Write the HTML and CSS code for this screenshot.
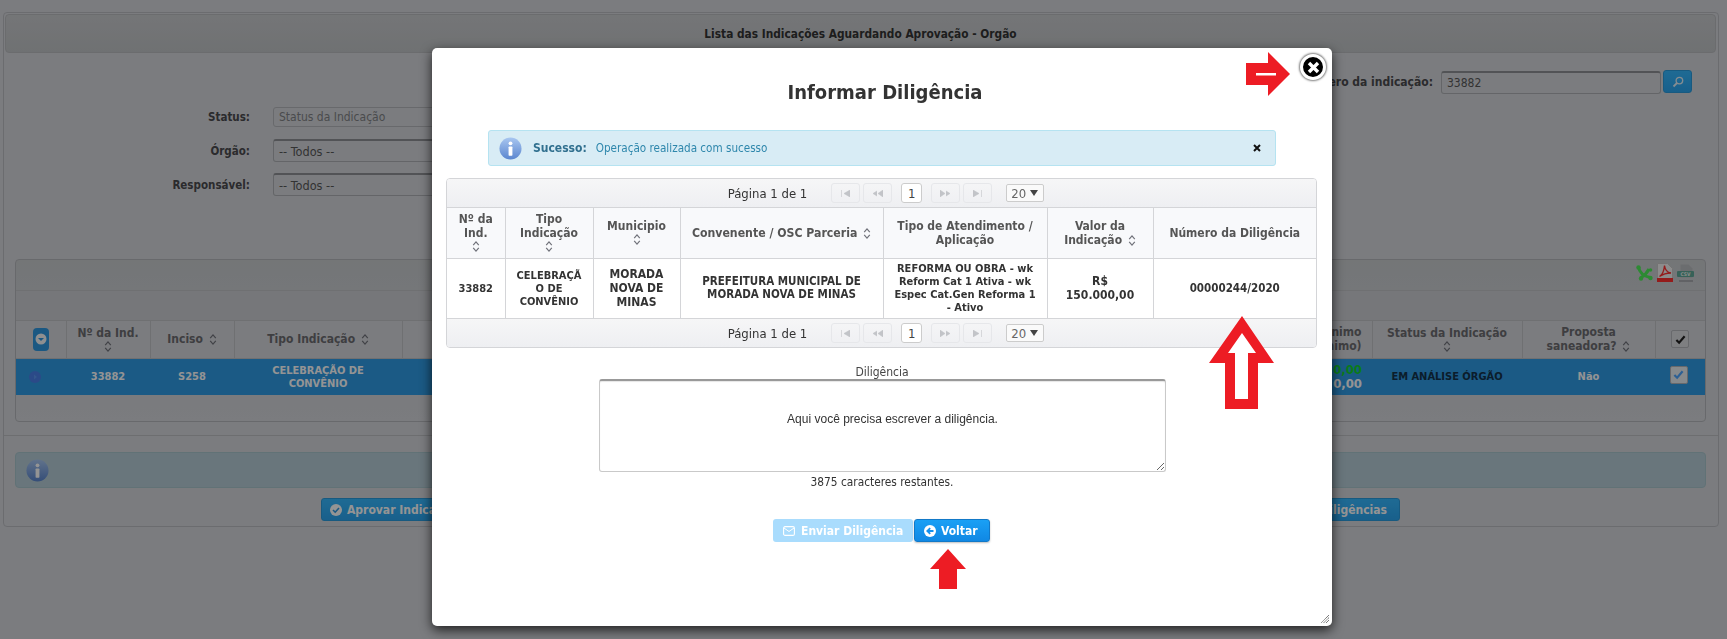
FILE: index.html
```html
<!DOCTYPE html>
<html lang="pt-BR">
<head>
<meta charset="utf-8">
<title>Lista das Indicações</title>
<link rel="stylesheet" href="styles.css">
</head>
<body>
<svg class="defs" width="0" height="0" aria-hidden="true">
  <symbol id="sort" viewBox="0 0 8 14"><path d="M1 5.500 4 2l3 3.500M1 8.500 4 12l3-3.500" fill="none" stroke="currentColor" stroke-width="1.300"/></symbol>
  <symbol id="check" viewBox="0 0 12 12"><path d="M1.500 6.500 4.500 9.500 10.500 2.500" fill="none" stroke="currentColor" stroke-width="2.400"/></symbol>
  <symbol id="info" viewBox="0 0 24 24"><circle cx="12" cy="12" r="11.500" fill="url(#infograd)"/><circle cx="12" cy="6.600" r="2" fill="#fff"/><rect x="10" y="10" width="4" height="9.500" rx=".8" fill="#fff"/></symbol>
  <linearGradient id="infograd" x1="0" y1="0" x2="0" y2="1"><stop offset="0" stop-color="#a8c6f0"/><stop offset="1" stop-color="#5b86cf"/></linearGradient>
</svg>

<div class="panel">
  <header class="panel-title">Lista das Indicações Aguardando Aprovação - Orgão</header>
  <form class="filters">
    <div class="filters-left">
      <div class="filter-row status-row"><label>Status:</label><span class="field field-disabled">Status da Indicação</span></div>
      <div class="filter-row organ-row"><label>Órgão:</label><span class="field field-select">-- Todos --</span></div>
      <div class="filter-row resp-row"><label>Responsável:</label><span class="field field-select">-- Todos --</span></div>
    </div>
    <div class="filters-right">
      <label>Número da indicação:</label>
      <span class="field field-number">33882</span>
      <button type="button" class="search-btn"><svg width="12" height="12" viewBox="0 0 12 12"><circle cx="7.400" cy="4.600" r="3.300" fill="none" stroke="#e6f2fa" stroke-width="1.300"/><path d="M5 7 1.500 10.500" stroke="#e6f2fa" stroke-width="1.800"/></svg></button>
    </div>
  </form>

  <section class="grid-panel">
    <div class="grid-tools">
      <svg width="17" height="16" viewBox="0 0 17 16"><path d="M2.500 2c1 6 5 9 11.500 10.500M13 4c-2 4-5 7-8.500 9" fill="none" stroke="#4eee58" stroke-width="3"/><circle cx="2.500" cy="2.500" r="2.200" fill="#4eee58"/><circle cx="14.500" cy="13" r="2.200" fill="#4eee58"/><circle cx="5" cy="13.500" r="2.200" fill="#4eee58"/><circle cx="14.500" cy="5" r="1.800" fill="#4eee58"/></svg>
      <svg width="16" height="19" viewBox="0 0 16 19"><path d="M.5.500h10l5 5v13H.5z" fill="#f2f2f2" stroke="#c8c8c8"/><rect y="15" width="16" height="4" fill="#ff3030"/><path d="M2.500 13.500C5 12 7 8 7.500 2.500c.5 4 3 7 6.500 7.500-4 0-8 1-11.500 3.500z" fill="none" stroke="#ff3030" stroke-width="1.300"/></svg>
      <svg width="17" height="18" viewBox="0 0 17 18"><path d="M3.500.500h8l4 4v9h-12z" fill="#b9bcc0"/><rect y="7" width="17" height="6" rx="1" fill="#5fa898"/><text x="8.500" y="12" class="csv-text">CSV</text><rect x="2" y="16" width="14" height="2" fill="#a7aaae"/></svg>
    </div>
    <div class="grid-band"></div>
    <table class="grid">
      <colgroup><col class="c1"><col class="c2"><col class="c3"><col class="c4"><col class="c5"><col class="c6"><col class="c7"><col class="c8"><col class="c9"></colgroup>
      <thead>
        <tr>
          <th><span class="expand-all"><svg width="12" height="12" viewBox="0 0 12 12"><circle cx="6" cy="6" r="5.500" fill="#f4f6f8"/><path d="M3 5h6L6 8z" fill="#2f98e0"/></svg></span></th>
          <th>Nº da Ind.<svg class="sort sort-block"><use href="#sort"/></svg></th>
          <th>Inciso <svg class="sort"><use href="#sort"/></svg></th>
          <th>Tipo Indicação <svg class="sort"><use href="#sort"/></svg></th>
          <th></th>
          <th class="right">Valor Mínimo<br>(Valor mínimo)</th>
          <th>Status da Indicação<svg class="sort sort-block"><use href="#sort"/></svg></th>
          <th>Proposta<br>saneadora? <svg class="sort"><use href="#sort"/></svg></th>
          <th><span class="checkbox"><svg width="11" height="11"><use href="#check"/></svg></span></th>
        </tr>
      </thead>
      <tbody>
        <tr class="selected">
          <td><svg class="row-toggle" width="12" height="12" viewBox="0 0 12 12"><circle cx="6" cy="6" r="6" fill="#4a80ea"/><path d="M5 3.500 8 6 5 8.500z" fill="#5a96f2"/></svg></td>
          <td>33882</td>
          <td>S258</td>
          <td>CELEBRAÇÃO DE<br>CONVÊNIO</td>
          <td></td>
          <td class="right values"><span class="money-green">R$ 100.000,00</span><br>R$ 0,00</td>
          <td class="dark">EM ANÁLISE ÓRGÃO</td>
          <td>Não</td>
          <td><span class="checkbox checkbox-on"><svg width="11" height="11"><use href="#check"/></svg></span></td>
        </tr>
      </tbody>
    </table>
    <div class="grid-footer"></div>
  </section>

  <div class="panel-foot">
    <div class="info-box"><svg width="23" height="23"><use href="#info"/></svg></div>
    <div class="actions">
      <button type="button" class="btn-dim"><svg width="12" height="12" viewBox="0 0 12 12"><circle cx="6" cy="6" r="6" fill="#fff"/><path d="M3 6l2.200 2.200L9 4" fill="none" stroke="#2f98e0" stroke-width="1.600"/></svg>Aprovar Indicação</button>
      <button type="button" class="btn-dim">Reprovar Indicação</button>
      <button type="button" class="btn-dim">Informar Diligências</button>
    </div>
  </div>
</div>

<div class="overlay"></div>

<div class="modal" role="dialog">
  <h2 class="modal-title">Informar Diligência</h2>
  <div class="alert">
    <svg class="alert-icon" width="23" height="23"><use href="#info"/></svg>
    <strong>Sucesso:</strong>
    <span class="alert-text">Operação realizada com sucesso</span>
    <svg class="alert-close" width="8" height="8" viewBox="0 0 8 8"><path d="M1 1l6 6M7 1 1 7" stroke="#111" stroke-width="2"/></svg>
  </div>

  <div class="datatable">
    <div class="pager pager-top">
      <span class="pager-label">Página 1 de 1</span>
      <span class="pbtns">
        <span class="pbtn"><svg width="9" height="7" viewBox="0 0 9 7"><path d="M.5 0v7M9 0v7L3 3.500z" fill="#c2c4c8" stroke="#c2c4c8" stroke-width=".6"/></svg></span>
        <span class="pbtn"><svg width="11" height="7" viewBox="0 0 11 7"><path d="M5 1 1 3.500 5 6M11 0v7L6 3.500z" fill="#c2c4c8" stroke="#c2c4c8" stroke-width=".6"/></svg></span>
      </span>
      <span class="pnum">1</span>
      <span class="pbtns">
        <span class="pbtn"><svg width="11" height="7" viewBox="0 0 11 7"><path d="M6 1l4 2.500L6 6M0 0v7l5-3.500z" fill="#c2c4c8" stroke="#c2c4c8" stroke-width=".6"/></svg></span>
        <span class="pbtn"><svg width="9" height="7" viewBox="0 0 9 7"><path d="M8.500 0v7M0 0v7l6-3.500z" fill="#c2c4c8" stroke="#c2c4c8" stroke-width=".6"/></svg></span>
      </span>
      <span class="psize">20 <i class="caret"></i></span>
    </div>
    <table class="dtable">
      <colgroup><col class="d1"><col class="d2"><col class="d3"><col class="d4"><col class="d5"><col class="d6"><col class="d7"></colgroup>
      <thead>
        <tr>
          <th>Nº da<br>Ind.<svg class="sort sort-block"><use href="#sort"/></svg></th>
          <th>Tipo<br>Indicação<svg class="sort sort-block"><use href="#sort"/></svg></th>
          <th>Municipio<svg class="sort sort-block"><use href="#sort"/></svg></th>
          <th class="wide-head">Convenente / OSC Parceria <svg class="sort"><use href="#sort"/></svg></th>
          <th>Tipo de Atendimento /<br>Aplicação</th>
          <th>Valor da<br>Indicação <svg class="sort"><use href="#sort"/></svg></th>
          <th>Número da Diligência</th>
        </tr>
      </thead>
      <tbody>
        <tr>
          <td>33882</td>
          <td>CELEBRAÇÃ<br>O DE<br>CONVÊNIO</td>
          <td class="strong12">MORADA<br>NOVA DE<br>MINAS</td>
          <td class="mid-cell">PREFEITURA MUNICIPAL DE<br>MORADA NOVA DE MINAS</td>
          <td>REFORMA OU OBRA - wk<br>Reform Cat 1 Ativa - wk<br>Espec Cat.Gen Reforma 1<br>- Ativo</td>
          <td class="strong12">R$<br>150.000,00</td>
          <td class="mid-cell">00000244/2020</td>
        </tr>
      </tbody>
    </table>
    <div class="pager pager-bottom">
      <span class="pager-label">Página 1 de 1</span>
      <span class="pbtns">
        <span class="pbtn"><svg width="9" height="7" viewBox="0 0 9 7"><path d="M.5 0v7M9 0v7L3 3.500z" fill="#c2c4c8" stroke="#c2c4c8" stroke-width=".6"/></svg></span>
        <span class="pbtn"><svg width="11" height="7" viewBox="0 0 11 7"><path d="M5 1 1 3.500 5 6M11 0v7L6 3.500z" fill="#c2c4c8" stroke="#c2c4c8" stroke-width=".6"/></svg></span>
      </span>
      <span class="pnum">1</span>
      <span class="pbtns">
        <span class="pbtn"><svg width="11" height="7" viewBox="0 0 11 7"><path d="M6 1l4 2.500L6 6M0 0v7l5-3.500z" fill="#c2c4c8" stroke="#c2c4c8" stroke-width=".6"/></svg></span>
        <span class="pbtn"><svg width="9" height="7" viewBox="0 0 9 7"><path d="M8.500 0v7M0 0v7l6-3.500z" fill="#c2c4c8" stroke="#c2c4c8" stroke-width=".6"/></svg></span>
      </span>
      <span class="psize">20 <i class="caret"></i></span>
    </div>
  </div>

  <label class="note-label" for="note">Diligência</label>
  <textarea id="note" class="note">Aqui você precisa escrever a diligência.</textarea>
  <div class="note-count">3875 caracteres restantes.</div>

  <div class="modal-actions">
    <button type="button" class="btn btn-send"><svg width="12" height="10" viewBox="0 0 12 10"><rect x=".6" y=".6" width="10.800" height="8.800" rx="1.500" fill="none" stroke="#fff" stroke-width="1.100"/><path d="M1 2l5 3.500L11 2" fill="none" stroke="#fff"/></svg>Enviar Diligência</button>
    <button type="button" class="btn btn-back"><svg width="12" height="12" viewBox="0 0 12 12"><circle cx="6" cy="6" r="6" fill="#fff"/><path d="M9.500 6H4M6.200 3.200 3.300 6l2.900 2.800" fill="none" stroke="#1391ef" stroke-width="1.800"/></svg>Voltar</button>
  </div>

  <button type="button" class="close" aria-label="Fechar"><svg width="15" height="15" viewBox="0 0 15 15"><path d="M3 3l9 9M12 3l-9 9" stroke="#fff" stroke-width="3.400"/></svg></button>

  <svg class="arrow arrow-right" width="45" height="45" viewBox="0 0 45 45"><path d="M0 11h22V0l22 22-22 22V33H0z" fill="#ed1c24"/><rect x="10" y="21" width="20" height="2.500" fill="#fff"/></svg>
  <svg class="arrow arrow-up-big" width="65" height="93" viewBox="0 0 65 93"><path d="M33 0 65 47H49V93H16V47H0z" fill="#ed1c24"/><path d="M33 17 47 37H39V83H26V37H19z" fill="#fff"/></svg>
  <svg class="arrow arrow-up-small" width="36" height="40" viewBox="0 0 36 40"><path d="M18 0 36 20H27V40H9V20H0z" fill="#ed1c24"/></svg>
  <svg class="resize-grip" width="11" height="8" viewBox="0 0 11 8"><path d="M10 0 2 8M10 2.500 4.500 8M10 5 7 8" stroke="#444" stroke-width="1" stroke-dasharray="1 .6"/></svg>
</div>
</body>
</html>
```
FILE: styles.css
```css
* { box-sizing: border-box; }
html, body { height: 100%; }
body {
  margin: 0;
  padding: 12px 8px 0 3px;
  background: #d4d6db;
  font-family: "DejaVu Sans Condensed", "DejaVu Sans", sans-serif;
  font-size: 12px;
  color: #333;
  overflow: hidden;
  position: relative;
}
.defs { position: absolute; }
button { font: inherit; }

.panel {
  height: 515px;
  border: 1px solid #b9bbc0;
  border-radius: 4px;
  display: flex;
  flex-direction: column;
  color: #4a4a4e;
}
.panel-title {
  height: 39px;
  margin: 1px 2px 0 1px;
  border: 1px solid #b8babe;
  border-radius: 4px;
  background: linear-gradient(#c9cbce, #c0c3c6);
  display: flex;
  align-items: center;
  justify-content: center;
  font-weight: bold;
  font-size: 11.800px;
  color: #333;
}

.filters {
  height: 206px;
  display: flex;
  justify-content: space-between;
}
.filters label { font-weight: bold; font-size: 11.500px; }
.filters-left { padding-top: 54px; display: flex; flex-direction: column; gap: 12px; }
.filter-row { display: flex; align-items: center; }
.filter-row label { width: 246px; text-align: right; margin-right: 23px; }
.status-row { height: 20px; }
.organ-row { height: 23px; }
.resp-row { height: 23px; margin-top: -1px; }
.field {
  display: flex;
  align-items: center;
  height: 100%;
  width: 520px;
  padding-left: 5px;
  border: 1px solid #adafb4;
  border-top: 2px solid #8d8f94;
  border-radius: 3px;
  background: #d4d6db;
  color: #585858;
}
.field-select { font-size: 12.600px; }
.field-disabled { border: 1px solid #b3b5ba; color: #808285; }
.filters-right { padding: 17px 26px 0 0; display: flex; align-items: flex-start; }
.filters-right label { line-height: 25px; margin-right: 8px; font-size: 12px; }
.field-number { width: 220px; height: 23px; margin-top: 1px; }
.search-btn {
  width: 29px;
  height: 23px;
  margin-left: 2px;
  padding: 0;
  border: 1px solid #2a9bdd;
  border-radius: 3px;
  background: linear-gradient(#36b8ff, #2aa5f0);
  display: flex;
  align-items: center;
  justify-content: center;
}

.grid-panel {
  margin: 0 12px 0 11px;
  height: 163px;
  border: 1px solid #b4b6ba;
  border-radius: 4px;
  background: linear-gradient(#c8cbce, #d4d6db);
  display: flex;
  flex-direction: column;
}
.grid-tools {
  height: 31px;
  display: flex;
  align-items: center;
  justify-content: flex-end;
  gap: 4px;
  padding: 0 11px 5px 0;
  border-bottom: 1px solid #bfc1c5;
}
.csv-text { font-size: 5px; font-weight: bold; fill: #e8f0ee; text-anchor: middle; }
.grid-band { height: 30px; border-bottom: 1px solid #bfc1c5; background: #ccced2; }
.grid { width: 100%; table-layout: fixed; border-collapse: collapse; }
.c1 { width: 50px; } .c2, .c3 { width: 84px; } .c4 { width: 168px; } .c5 { width: 677px; }
.c6 { width: 293px; } .c7 { width: 150px; } .c8 { width: 133px; } .c9 { width: 50px; }
.grid th {
  height: 37px;
  padding: 0;
  border-right: 1px solid #bfc1c5;
  border-bottom: 1px solid #bfc1c5;
  background: #d4d6db;
  color: #6c6c70;
  font-size: 12px;
  line-height: 14px;
  text-align: center;
}
.grid th:last-child { border-right: 0; }
.grid td {
  height: 37px;
  padding: 0;
  background: #309be5;
  color: #fff;
  font-weight: bold;
  font-size: 11px;
  line-height: 13px;
  text-align: center;
}
.grid .right { text-align: right; padding-right: 10px; }
.grid td.values { font-size: 13px; line-height: 14px; }
.money-green { color: #12d22d; }
.grid td.dark { color: #14324a; }
.sort { width: 8px; height: 13px; margin-left: 2px; vertical-align: middle; color: #70727a; }
.sort-block { display: block; margin: 0 auto; }
.expand-all {
  display: inline-flex;
  width: 16px;
  height: 23px;
  align-items: center;
  justify-content: center;
  border-radius: 4px;
  background: #2f98e0;
  vertical-align: middle;
}
.row-toggle { display: block; margin-left: 13px; }
.checkbox {
  display: inline-flex;
  width: 18px;
  height: 18px;
  align-items: center;
  justify-content: center;
  border: 1px solid #b3b5ba;
  border-radius: 2px;
  background: #d9dbdf;
  color: #222;
  vertical-align: middle;
}
.checkbox-on { color: #4fa5ff; background: #e8eef2; margin: -4px 3px 0 0; }
.grid-footer { flex: 1; }

.panel-foot { margin-top: 13px; border-top: 1px solid #bcbec2; padding: 16px 12px 0 11px; }
.info-box {
  height: 36px;
  border: 1px solid #a8c4cc;
  border-radius: 4px;
  background: #b5ccd6;
  display: flex;
  align-items: center;
  padding-left: 10px;
}
.actions {
  margin-top: 10px;
  padding: 0 306px 0 306px;
  display: flex;
  justify-content: space-between;
}
.btn-dim {
  height: 23px;
  padding: 0 12px 0 8px;
  border: 1px solid #2a9bdd;
  border-radius: 3px;
  background: linear-gradient(#36b8ff, #2aa5f0);
  color: #fff;
  font-weight: bold;
  font-size: 12px;
  white-space: nowrap;
  display: flex;
  align-items: center;
  gap: 5px;
}

.overlay { position: fixed; inset: 0; background: rgba(0, 0, 0, .42); }

.modal {
  position: absolute;
  left: 432px;
  top: 48px;
  width: 900px;
  height: 578px;
  background: #fff;
  border-radius: 5px;
  box-shadow: 0 4px 12px rgba(0, 0, 0, .75);
  display: flex;
  flex-direction: column;
  align-items: center;
}
.modal-title {
  margin: 29px 0 0 6px;
  height: 30px;
  line-height: 30px;
  font-size: 20px;
  font-weight: bold;
  color: #333;
}
.alert {
  width: 788px;
  height: 36px;
  margin-top: 23px;
  padding: 0 10px;
  border: 1px solid #b5e3f1;
  border-radius: 3px;
  background: #d8ecf5;
  color: #2e87ac;
  display: flex;
  align-items: center;
}
.alert-icon { margin-right: 11px; flex: none; }
.alert strong { margin-right: 9px; color: #31708f; }
.alert-text { font-size: 11.600px; }
.alert-close { margin-left: auto; margin-right: 4px; }

.datatable {
  width: 871px;
  margin: 12px 1px 0 0;
  border: 1px solid #d4d5d8;
  border-radius: 4px;
  overflow: hidden;
}
.pager {
  height: 29px;
  padding-left: 9px;
  background: linear-gradient(#f6f6f7, #eeeff2);
  display: flex;
  align-items: center;
  justify-content: center;
  font-size: 13px;
  color: #333;
}
.pager-top { border-bottom: 1px solid #d4d5d8; }
.pager-label { margin-right: 24px; }
.pbtns { display: flex; gap: 3px; }
.pbtn {
  width: 29px;
  height: 20px;
  border: 1px solid #e6e7ea;
  border-radius: 3px;
  display: flex;
  align-items: center;
  justify-content: center;
}
.pnum {
  width: 21px;
  height: 20px;
  margin: 0 9px;
  border: 1px solid #ccc;
  border-radius: 3px;
  background: #fff;
  display: flex;
  align-items: center;
  justify-content: center;
  color: #444;
}
.psize {
  width: 38px;
  height: 18px;
  margin-left: 14px;
  padding-left: 4px;
  border: 1px solid #ccc;
  border-radius: 2px;
  background: #fafafa;
  color: #666;
  display: flex;
  align-items: center;
  gap: 4px;
}
.caret { width: 0; height: 0; border: 4px solid transparent; border-top: 6px solid #444; border-bottom: 0; }
.dtable { width: 100%; table-layout: fixed; border-collapse: collapse; }
.d1 { width: 58px; } .d2 { width: 88px; } .d3 { width: 87px; } .d4 { width: 203px; }
.d5 { width: 164px; } .d6 { width: 106px; } .d7 { width: 163px; }
.dtable th {
  height: 50px;
  padding: 0 4px;
  border-right: 1px solid #d4d5d8;
  border-bottom: 1px solid #d4d5d8;
  background: #f8f9fb;
  color: #555;
  font-size: 12px;
  line-height: 14px;
  text-align: center;
}
.dtable th.wide-head { font-size: 12.200px; }
.dtable td {
  height: 60px;
  padding: 0 4px;
  border-right: 1px solid #d4d5d8;
  color: #333;
  font-weight: bold;
  font-size: 11px;
  line-height: 13px;
  text-align: center;
}
.dtable th:last-child, .dtable td:last-child { border-right: 0; }
.dtable td.strong12 { font-size: 12px; line-height: 14px; }
.dtable td.mid-cell { font-size: 11.500px; }
.pager-bottom { border-top: 1px solid #d4d5d8; }

.note-label { margin-top: 17px; line-height: 14px; color: #444; }
.note {
  width: 567px;
  height: 93px;
  margin: 0 0 0 1px;
  padding: 31px 7px 0 27px;
  border: 1px solid #c9c9c9;
  border-top: 2px solid #999;
  border-radius: 3px;
  font-family: "Liberation Sans", sans-serif;
  font-size: 12px;
  color: #333;
  text-align: center;
  resize: both;
  outline: 0;
  box-shadow: inset 0 1px 1px rgba(0, 0, 0, .1);
}
.note-count { margin-top: 3px; line-height: 14px; color: #333; font-size: 11.800px; }
.modal-actions { margin: 30px 1px 0 0; display: flex; gap: 1px; }
.btn {
  height: 23px;
  padding: 0 0 0 9px;
  border-radius: 3px;
  border: 1px solid transparent;
  color: #fff;
  font-weight: bold;
  font-size: 12px;
  white-space: nowrap;
  display: flex;
  align-items: center;
  gap: 6px;
}
.btn svg { flex: none; }
.btn-send { width: 140px; background: #a9dcfd; }
.btn-back {
  width: 76px;
  gap: 5px;
  background: linear-gradient(#1aa0f5, #1088e4);
  border-color: #1279c8;
  box-shadow: 0 1px 2px rgba(0, 0, 0, .25);
}

.close {
  position: absolute;
  top: 6px;
  right: 6px;
  width: 26px;
  height: 26px;
  padding: 0;
  border: 3px solid #fff;
  border-radius: 50%;
  background: #000;
  box-shadow: 0 0 2px 1px rgba(0, 0, 0, .5);
  display: flex;
  align-items: center;
  justify-content: center;
}
.arrow { position: absolute; }
.arrow-right { left: 814px; top: 4px; }
.arrow-up-big { left: 777px; top: 268px; }
.arrow-up-small { left: 498px; top: 501px; }
.resize-grip { position: absolute; right: 2px; bottom: 3px; }
```
